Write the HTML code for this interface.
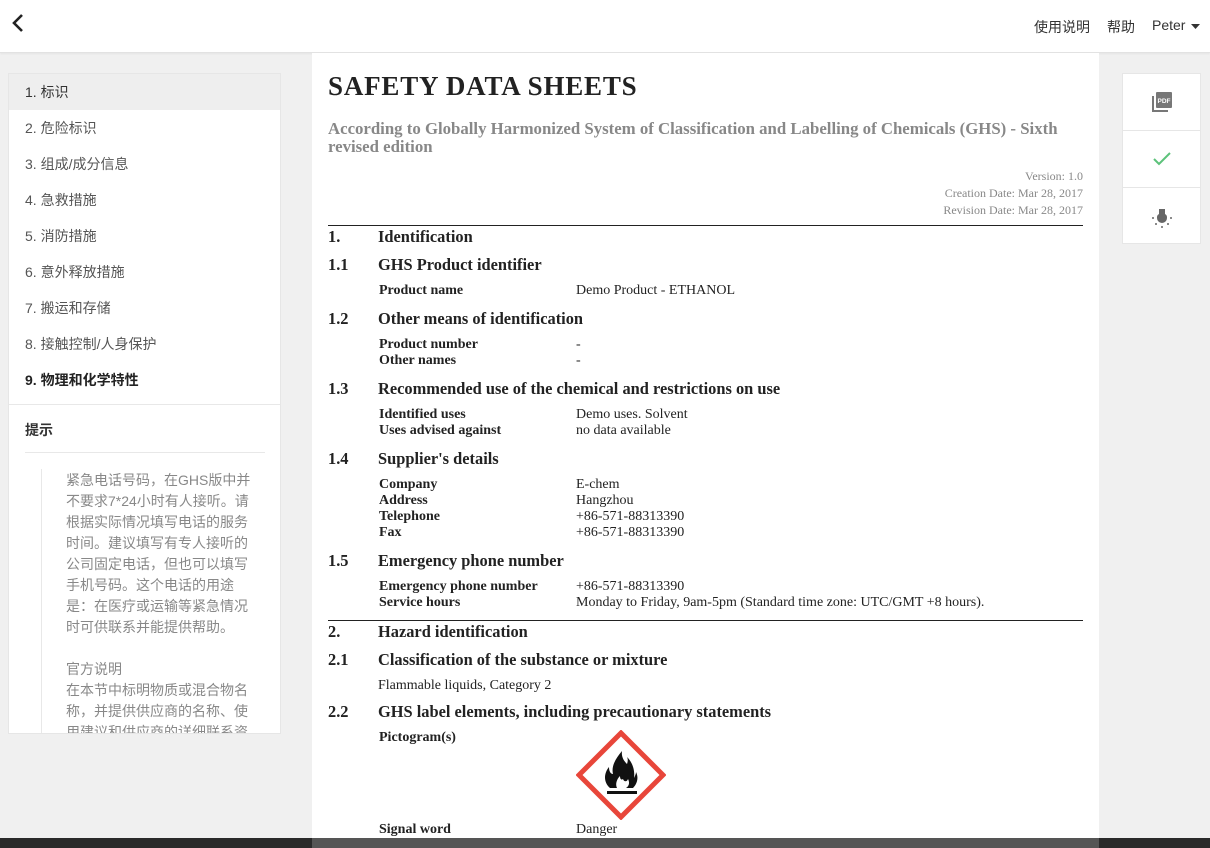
<!DOCTYPE html>
<html><head><meta charset="utf-8"><style>
*{margin:0;padding:0;box-sizing:border-box}
body{width:1210px;height:848px;overflow:hidden;background:#f0f0f0;position:relative;font-family:"Liberation Sans","Noto Sans CJK SC",sans-serif}
.a{position:absolute;white-space:nowrap}
#hdr{position:absolute;left:0;top:0;width:1210px;height:53px;background:#fff;border-bottom:1px solid #e2e2e2;box-shadow:0 1px 2px rgba(0,0,0,.05)}
.nav{font-size:14px;color:#333;top:17px}
#side{position:absolute;left:8px;top:73px;width:273px;height:661px;background:#fff;border:1px solid #e6e6e6;overflow:hidden}
.it{position:absolute;left:0;width:273px;height:36px;line-height:36px;padding-left:16px;font-size:14px;color:#555}
.tip{position:absolute;left:57px;width:192px;font-size:14px;line-height:21px;color:#888;white-space:normal}
#paper{position:absolute;left:312px;top:53px;width:787px;height:795px;background:#fff}
.s{font-family:"Liberation Serif",serif;color:#222}
.h{font-size:16.4px;font-weight:bold;margin-top:1px}
.r{font-size:14px;line-height:16px}
.b{font-weight:bold}
#tools{position:absolute;left:1122px;top:73px;width:79px;height:171px;background:#fff;border:1px solid #e6e6e6}
.cell{height:57px;border-bottom:1px solid #e6e6e6;display:flex;align-items:center;justify-content:center}
</style></head><body>
<div id="hdr">
<svg class="a" style="left:10px;top:13px" width="16" height="20" viewBox="0 0 16 20"><path d="M12 2 L4 10 L12 18" fill="none" stroke="#222" stroke-width="2.6"/></svg>
<div class="a nav" style="left:1034px">使用说明</div>
<div class="a nav" style="left:1107px">帮助</div>
<div class="a nav" style="left:1152px">Peter</div>
<svg class="a" style="left:1191px;top:24px" width="9" height="5"><path d="M0 0H9L4.5 5z" fill="#333"/></svg>
</div>

<div id="side">
<div class="it" style="top:0;background:#eeeeee;color:#333">1. 标识</div>
<div class="it" style="top:36px">2. 危险标识</div>
<div class="it" style="top:72px">3. 组成/成分信息</div>
<div class="it" style="top:108px">4. 急救措施</div>
<div class="it" style="top:144px">5. 消防措施</div>
<div class="it" style="top:180px">6. 意外释放措施</div>
<div class="it" style="top:216px">7. 搬运和存储</div>
<div class="it" style="top:252px">8. 接触控制/人身保护</div>
<div class="it" style="top:288px;font-weight:bold;color:#222">9. 物理和化学特性</div>
<div style="position:absolute;left:0;top:330px;width:273px;border-top:1px solid #e8e8e8"></div>
<div class="a" style="left:16px;top:346px;font-size:14px;font-weight:bold;color:#333">提示</div>
<div style="position:absolute;left:16px;top:378px;width:240px;border-top:1px solid #e8e8e8"></div>
<div style="position:absolute;left:32px;top:395px;height:270px;border-left:1px solid #e8e8e8"></div>
<div class="tip" style="top:396px">紧急电话号码，在GHS版中并不要求7*24小时有人接听。请根据实际情况填写电话的服务时间。建议填写有专人接听的公司固定电话，但也可以填写手机号码。这个电话的用途是：在医疗或运输等紧急情况时可供联系并能提供帮助。<br><br>官方说明<br>在本节中标明物质或混合物名称，并提供供应商的名称、使用建议和供应商的详细联系资料</div>
</div>

<div id="paper"></div>
<div class="a s b" style="left:328px;top:71px;font-size:27px;letter-spacing:0.8px">SAFETY DATA SHEETS</div>
<div class="a s b" style="left:328px;top:120px;font-size:16.8px;color:#888;line-height:18px">According to Globally Harmonized System of Classification and Labelling of Chemicals (GHS) - Sixth<br>revised edition</div>
<div class="a s" style="right:127px;top:168px;font-size:12px;color:#888;line-height:17px;text-align:right">Version: 1.0<br>Creation Date: Mar 28, 2017<br>Revision Date: Mar 28, 2017</div>
<div class="a" style="left:328px;top:225px;width:755px;border-top:1px solid #222"></div>
<div class="a" style="left:328px;top:620px;width:755px;border-top:1px solid #222"></div>

<div class="a s h" style="left:328px;top:226px">1.</div><div class="a s h" style="left:378px;top:226px">Identification</div>
<div class="a s h" style="left:328px;top:254px">1.1</div><div class="a s h" style="left:378px;top:254px">GHS Product identifier</div>
<div class="a s r b" style="left:379px;top:283px">Product name</div><div class="a s r" style="left:576px;top:283px">Demo Product - ETHANOL</div>
<div class="a s h" style="left:328px;top:308px">1.2</div><div class="a s h" style="left:378px;top:308px">Other means of identification</div>
<div class="a s r b" style="left:379px;top:337px">Product number<br>Other names</div><div class="a s r" style="left:576px;top:337px">-<br>-</div>
<div class="a s h" style="left:328px;top:378px">1.3</div><div class="a s h" style="left:378px;top:378px">Recommended use of the chemical and restrictions on use</div>
<div class="a s r b" style="left:379px;top:407px">Identified uses<br>Uses advised against</div><div class="a s r" style="left:576px;top:407px">Demo uses. Solvent<br>no data available</div>
<div class="a s h" style="left:328px;top:448px">1.4</div><div class="a s h" style="left:378px;top:448px">Supplier's details</div>
<div class="a s r b" style="left:379px;top:477px">Company<br>Address<br>Telephone<br>Fax</div><div class="a s r" style="left:576px;top:477px">E-chem<br>Hangzhou<br>+86-571-88313390<br>+86-571-88313390</div>
<div class="a s h" style="left:328px;top:550px">1.5</div><div class="a s h" style="left:378px;top:550px">Emergency phone number</div>
<div class="a s r b" style="left:379px;top:579px">Emergency phone number<br>Service hours</div><div class="a s r" style="left:576px;top:579px">+86-571-88313390<br>Monday to Friday, 9am-5pm (Standard time zone: UTC/GMT +8 hours).</div>
<div class="a s h" style="left:328px;top:621px">2.</div><div class="a s h" style="left:378px;top:621px">Hazard identification</div>
<div class="a s h" style="left:328px;top:649px">2.1</div><div class="a s h" style="left:378px;top:649px">Classification of the substance or mixture</div>
<div class="a s r" style="left:378px;top:678px">Flammable liquids, Category 2</div>
<div class="a s h" style="left:328px;top:701px">2.2</div><div class="a s h" style="left:378px;top:701px">GHS label elements, including precautionary statements</div>
<div class="a s r b" style="left:379px;top:730px">Pictogram(s)</div>
<svg class="a" style="left:576px;top:730px" width="90" height="90" viewBox="0 0 90 90">
<path d="M45 3 L87 45 L45 87 L3 45 Z" fill="#fff" stroke="#e8463a" stroke-width="5"/>
<path d="M34 58 C27 52 28 43 33 37 C33 42 35 44 37 44 C35 36 40 28 46 21 C45 28 49 32 51 34 C52 31 52 29 51 27 C57 33 59 41 58 48 C59 46 60 44 60 42 C63 48 61 54 57 58 Z M41 58 C39 54 41 49 44 46 C44 50 46 50 47 49 C48 52 51 52 52 49 C54 53 53 56 50 58 Z" fill="#111" fill-rule="evenodd"/>
<rect x="31" y="61" width="30" height="3" fill="#111"/>
</svg>
<div class="a s r b" style="left:379px;top:822px">Signal word</div><div class="a s r" style="left:576px;top:822px">Danger</div>

<div id="tools">
<div class="cell"><svg width="22" height="22" viewBox="0 0 22 22"><path d="M2 5V20H17" fill="none" stroke="#777" stroke-width="2"/><rect x="5" y="1" width="16" height="16" rx="1" fill="#777"/><text x="13" y="12" font-size="6.5" font-weight="bold" fill="#fff" text-anchor="middle" font-family="Liberation Sans">PDF</text></svg></div>
<div class="cell"><svg width="20" height="16" viewBox="0 0 20 16"><path d="M2 8L7 13L18 2" fill="none" stroke="#5cc27a" stroke-width="2"/></svg></div>
<div class="cell" style="border:none"><svg width="24" height="24" viewBox="0 0 24 24"><path d="M9 4H15V9A4 4 0 0 1 17 13A5 5 0 0 1 7 13A4 4 0 0 1 9 9Z" fill="#666"/><g fill="#666"><circle cx="3" cy="13" r="1"/><circle cx="21" cy="13" r="1"/><circle cx="6" cy="19" r="1"/><circle cx="18" cy="19" r="1"/><circle cx="12" cy="22" r="1"/></g></svg></div>
</div>

<div class="a" style="left:0;top:838px;width:1210px;height:10px;background:#2a2a2a"></div>
<div class="a" style="left:312px;top:838px;width:787px;height:10px;background:#555"></div>
</body></html>
